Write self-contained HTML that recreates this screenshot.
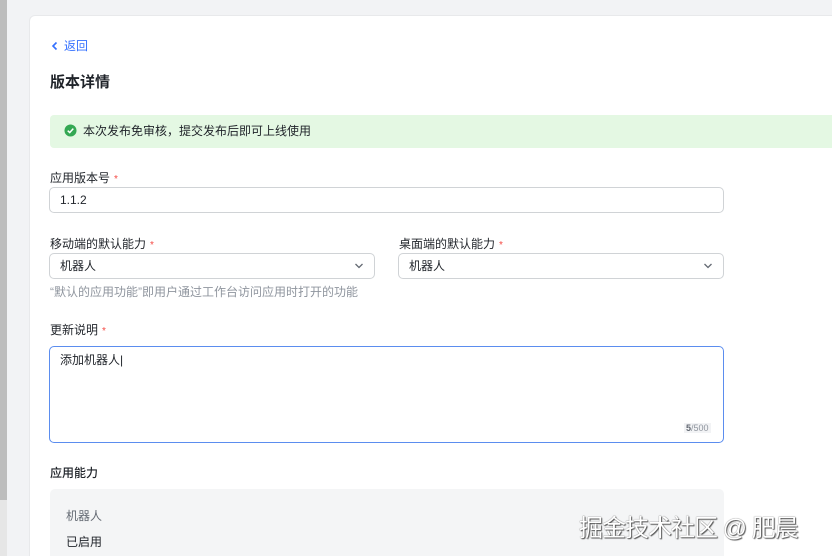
<!DOCTYPE html>
<html style="width:832px;height:556px;overflow:hidden"><head><meta charset="utf-8"><style>
*{box-sizing:border-box;margin:0;padding:0}
body{width:832px;height:556px;overflow:hidden;background:#f2f3f5;position:relative;font-family:"Liberation Sans","Noto Sans CJK SC",sans-serif;color:#1f2329;font-size:12px}
.sb{position:absolute;left:0;top:0;width:7px;height:500px;background:#bdbdbd}
.sb2{position:absolute;left:0;top:500px;width:7px;height:56px;background:#e6e6e6}
.card{position:absolute;left:29px;top:15px;width:820px;height:541px;background:#fff;border:1px solid #e8e9eb;border-bottom:none;border-radius:6px 6px 0 0}
.a{position:absolute}
.lbl{font-size:12px;color:#1f2329}
.req{color:#f54a45;margin-left:4px;font-size:10px}
.inp{position:absolute;height:26px;border:1px solid #d0d3d6;border-radius:5px;padding-left:10px;line-height:24px;font-size:12px}
.chev{position:absolute;right:10px;top:8px}
</style></head><body>
<div class="sb"></div><div class="sb2"></div>
<div class="card"></div>
<div class="a" style="left:51px;top:38px;color:#3370ff;font-size:12px;line-height:16px"><svg width="8" height="10" viewBox="0 0 8 10" style="margin-right:5px;vertical-align:-1px"><path d="M5.5 1.5 L2 5 L5.5 8.5" stroke="#3370ff" stroke-width="1.6" fill="none"/></svg>返回</div>
<div class="a" style="left:50px;top:73px;font-size:15px;font-weight:bold;line-height:20px">版本详情</div>
<div class="a" style="left:50px;top:115px;width:790px;height:33px;background:#e4f8e3;border-radius:4px"></div>
<div class="a" style="left:64px;top:124px"><svg width="13" height="13" viewBox="0 0 14 14"><circle cx="7" cy="7" r="6.5" fill="#34a853"/><path d="M4 7.2 L6.2 9.2 L10 5" stroke="#fff" stroke-width="1.6" fill="none"/></svg></div>
<div class="a" style="left:83px;top:123px;font-size:12px;line-height:16px">本次发布免审核，提交发布后即可上线使用</div>
<div class="a lbl" style="left:50px;top:169px">应用版本号<span class="req">*</span></div>
<div class="inp" style="left:49px;top:187px;width:675px">1.1.2</div>
<div class="a lbl" style="left:50px;top:235px">移动端的默认能力<span class="req">*</span></div>
<div class="inp" style="left:49px;top:253px;width:326px">机器人<svg class="chev" width="10" height="8" viewBox="0 0 10 8"><path d="M1.5 2 L5 5.5 L8.5 2" stroke="#646a73" stroke-width="1.3" fill="none"/></svg></div>
<div class="a lbl" style="left:399px;top:235px">桌面端的默认能力<span class="req">*</span></div>
<div class="inp" style="left:398px;top:253px;width:326px">机器人<svg class="chev" width="10" height="8" viewBox="0 0 10 8"><path d="M1.5 2 L5 5.5 L8.5 2" stroke="#646a73" stroke-width="1.3" fill="none"/></svg></div>
<div class="a" style="left:50px;top:283px;color:#8f959e;font-size:12px">“默认的应用功能”即用户通过工作台访问应用时打开的功能</div>
<div class="a lbl" style="left:50px;top:321px">更新说明<span class="req">*</span></div>
<div class="a" style="left:49px;top:346px;width:675px;height:97px;border:1px solid #5b8def;border-radius:5px"></div>
<div class="a" style="left:60px;top:351px;font-size:12px">添加机器人|</div>
<div class="a" style="left:684px;top:423px;font-size:9px;color:#8f959e;background:#f2f3f5;padding:0 2px"><b style="color:#646a73">5</b>/500</div>
<div class="a lbl" style="left:50px;top:464px;font-weight:500">应用能力</div>
<div class="a" style="left:50px;top:489px;width:674px;height:80px;background:#f4f5f6;border-radius:5px"></div>
<div class="a" style="left:66px;top:507px;color:#646a73">机器人</div>
<div class="a" style="left:66px;top:533px">已启用</div>
<div class="a" style="left:579px;top:508px;font-size:24px;color:#fff;text-shadow:0 0 1px #444,1px 1px 1px #555;letter-spacing:-1px;white-space:nowrap">掘金技术社区 @ 肥晨</div>
</body></html>
